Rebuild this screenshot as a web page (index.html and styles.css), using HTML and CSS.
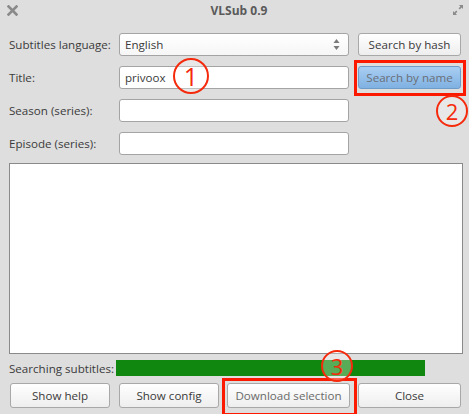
FILE: index.html
```html
<!DOCTYPE html>
<html>
<head>
<meta charset="utf-8">
<link rel="stylesheet" href="styles.css">
</head>
<body>
<div class="window">
  <div class="titlebar">
    <svg class="tb-close" width="11" height="11" viewBox="0 0 11 11"><path d="M1.5 1.5 L9.5 9.5 M9.5 1.5 L1.5 9.5" stroke="#8a8a8a" stroke-width="2.6" stroke-linecap="square"/></svg>
    <div class="tb-title">VLSub 0.9</div>
    <svg class="tb-max" width="12" height="12" viewBox="0 0 12 12"><path d="M7 1 H11 V5 L9.6 3.6 L7.8 5.4 L6.6 4.2 L8.4 2.4 Z" fill="#8a8a8a"/><path d="M5 11 H1 V7 L2.4 8.4 L4.2 6.6 L5.4 7.8 L3.6 9.6 Z" fill="#8a8a8a"/></svg>
  </div>
  <div class="content">
    <div class="form">
      <label class="lbl">Subtitles language:</label>
      <div class="combo"><span>English</span>
        <svg class="arrows" width="7" height="13" viewBox="0 0 7 13"><path d="M3.5 1 L6.5 5 H0.5 Z" fill="#7a7a7a"/><path d="M3.5 12 L6.5 8 H0.5 Z" fill="#7a7a7a"/></svg>
      </div>
      <button class="btn">Search by hash</button>

      <label class="lbl">Title:</label>
      <div class="input">privoox</div>
      <button class="btn btn-blue">Search by name</button>

      <label class="lbl">Season (series):</label>
      <div class="input"></div>
      <div></div>

      <label class="lbl">Episode (series):</label>
      <div class="input"></div>
      <div></div>
    </div>
    <div class="list"></div>
    <div class="status">
      <span class="lbl">Searching subtitles:</span>
      <div class="progress"></div>
    </div>
    <div class="buttons">
      <button class="btn b-help">Show help</button>
      <button class="btn b-config">Show config</button>
      <button class="btn b-dl">Download selection</button>
      <button class="btn b-close">Close</button>
    </div>
  </div>

  <div class="mark-circle c1">1</div>
  <div class="mark-rect r2"></div>
  <div class="mark-circle c2">2</div>
  <div class="mark-rect r3"></div>
  <div class="mark-circle c3">3</div>
</div>
</body>
</html>
```
FILE: styles.css
```css
html, body {
  margin: 0;
  padding: 0;
  background: #dedede;
}
.window {
  position: relative;
  width: 469px;
  height: 414px;
  overflow: hidden;
  background: #dedede;
  font-family: "Open Sans", "Noto Sans", sans-serif;
  font-size: 11.6px;
  color: #3b3b3b;
}
.titlebar {
  height: 20px;
  display: flex;
  align-items: center;
  justify-content: space-between;
  padding: 0 5px 0 7px;
}
.tb-title {
  font-weight: bold;
  color: #5a5a5a;
  font-size: 12px;
  margin-left: 8px;
}
.content {
  padding: 13px 8px 0 9px;
}
.form {
  display: grid;
  grid-template-columns: 101px 230px 103px;
  column-gap: 9px;
  row-gap: 10px;
  grid-auto-rows: 23px;
  align-items: center;
}
.lbl {
  white-space: nowrap;
}
.combo, .input {
  height: 23px;
  box-sizing: border-box;
  border: 1px solid #a4a4a4;
  border-radius: 3px;
  background: #fff;
  display: flex;
  align-items: center;
  padding: 0 5px;
}
.combo {
  justify-content: space-between;
  background: linear-gradient(#ffffff, #f6f6f6);
  padding-right: 8px;
}
.btn {
  font-family: inherit;
  font-size: 11.6px;
  color: #3b3b3b;
  height: 23px;
  box-sizing: border-box;
  border: 1px solid #a8a8a8;
  border-radius: 3px;
  background: linear-gradient(#ffffff, #eeeeee);
  padding: 0;
  margin: 0;
}
.btn-blue {
  color: #6a6f77;
  border-color: #6f9bc9;
  background: linear-gradient(#a9cef2, #7fb1e2);
}
.list {
  margin-top: 8px;
  height: 191px;
  width: 454px;
  box-sizing: border-box;
  border: 1px solid #8a8a8a;
  background: #fff;
}
.status {
  display: grid;
  grid-template-columns: 107px 309px;
  align-items: center;
  margin-top: 6px;
  height: 16px;
}
.progress {
  height: 16px;
  background: #10870f;
}
.buttons {
  display: flex;
  margin-top: 7px;
  padding-left: 1px;
}
.buttons .btn { height: 25px; }
.b-help { width: 100px; }
.b-config { width: 100px; margin-left: 9px; }
.b-dl { width: 123px; margin-left: 8px; color: #6a6a6a; }
.b-close { width: 103px; margin-left: 8px; }

.mark-circle {
  position: absolute;
  box-sizing: border-box;
  border: 2.5px solid #f52a0c;
  border-radius: 50%;
  background: rgba(255,255,255,0.3);
  color: #f52a0c;
  display: flex;
  align-items: center;
  justify-content: center;
  font-family: "Open Sans", sans-serif;
  line-height: 1;
}
.c1 { left: 173px; top: 58px; width: 36px; height: 36px; font-size: 25px; }
.c2 { left: 436px; top: 95px; width: 32px; height: 32px; font-size: 22px; }
.c3 { left: 321px; top: 350px; width: 32px; height: 32px; font-size: 22px; }
.mark-rect {
  position: absolute;
  box-sizing: border-box;
  border: 3px solid #fb1a00;
}
.r2 { left: 354px; top: 60px; width: 112px; height: 36px; }
.r3 { left: 222px; top: 378px; width: 135px; height: 38px; }
```
